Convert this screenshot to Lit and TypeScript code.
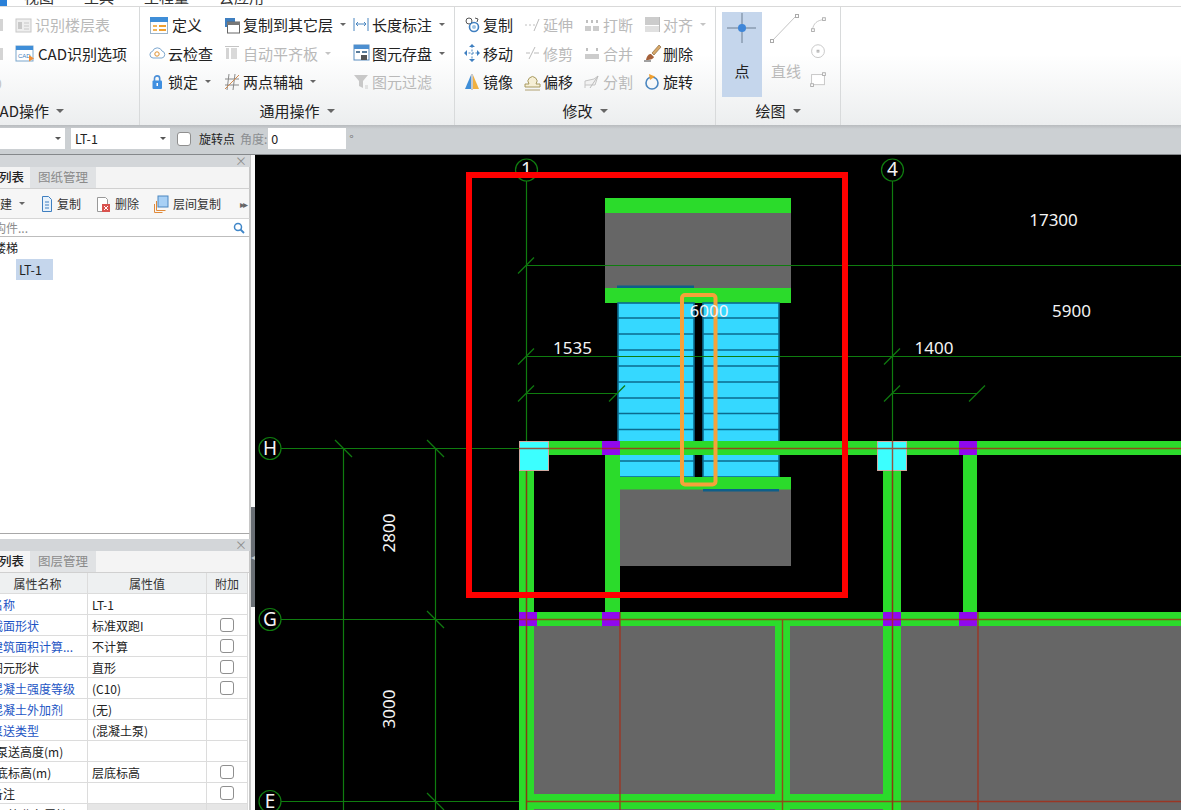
import { LitElement, html, css, svg, nothing } from 'lit';
import { customElement } from 'lit/decorators.js';

const ic = (w: number, body: unknown) =>
  html`<svg class="ic" width=${w} height="20" viewBox="0 0 ${w} 20">${body}</svg>`;

const ICONS: Record<string, unknown> = {
  define: ic(20, svg`<rect x="1.5" y="2.5" width="17" height="16" fill="#fff" stroke="#9db4c8"/><rect x="1" y="2" width="18" height="5" fill="#3f8ed8"/><rect x="4" y="10" width="4" height="2" fill="#f2b45a"/><rect x="4" y="14" width="4" height="2" fill="#f2b45a"/><rect x="10" y="10" width="7" height="2" fill="#f0a030"/><rect x="10" y="14" width="7" height="2" fill="#f0a030"/>`),
  copyLayer: ic(16, svg`<rect x="1" y="3" width="10" height="9" fill="#3f7fc0"/><rect x="3.5" y="7" width="12" height="11" fill="#fff" stroke="#666"/><rect x="3" y="7" width="13" height="3" fill="#777"/>`),
  dim: ic(16, svg`<path d="M1 3v13M15 3v13" stroke="#4a86c0" fill="none"/><path d="M3 9h10M5 7L3 9l2 2M11 7l2 2-2 2" stroke="#4a86c0" fill="none"/>`),
  cloud: ic(16, svg`<path d="M4 15a3.4 3.4 0 0 1-.4-6.7A5 5 0 0 1 13 8a3.6 3.6 0 0 1 0 7z" fill="#fff" stroke="#7da7cf"/><circle cx="8" cy="11" r="2.2" fill="none" stroke="#e0912f"/>`),
  level: ic(16, svg`<path d="M1 3.5h14" stroke="#c4c4c4"/><rect x="2" y="5" width="3" height="11" fill="#d4d4d4"/><rect x="7" y="5" width="6" height="11" fill="#d9d9d9"/>`),
  save: ic(16, svg`<rect x="1" y="2" width="15" height="15" fill="#fff" stroke="#5a8dbf"/><rect x="1" y="2" width="15" height="4" fill="#4d8fd0"/><rect x="3" y="8" width="4" height="2" fill="#5a7c9a"/><rect x="9" y="8" width="5" height="2" fill="#5a7c9a"/><rect x="8" y="12" width="6" height="5" fill="#555"/>`),
  lock: ic(16, svg`<path d="M5.5 9V6.5a2.6 2.6 0 0 1 5.2 0V9" fill="none" stroke="#4a8fd8" stroke-width="1.6"/><rect x="3.5" y="8.5" width="9.5" height="8.5" rx="1" fill="#3f8fe0"/><rect x="7.5" y="11" width="1.5" height="3" fill="#fff"/>`),
  axis: ic(16, svg`<path d="M5 2L3 18M11 2L9 18M1 7h14M1 13h14" stroke="#8a8a8a" fill="none"/><path d="M1 17L15 3" stroke="#d08a50"/>`),
  filter: ic(16, svg`<path d="M1 3h14L10 9v7L6 14V9z" fill="#c8c8c8"/><path d="M12 14h3M12 16h3" stroke="#ccc"/>`),
  cad: ic(20, svg`<rect x="1" y="3" width="17" height="15" fill="#fff" stroke="#7aa6cc"/><rect x="1" y="3" width="17" height="4" fill="#3f8ed8"/><text x="3" y="14.5" class="ict">CAD</text><path d="M14 12l5 3.5-5 3z" fill="#f0903a"/>`),
  floor: ic(17, svg`<rect x="1" y="4" width="15" height="13" fill="#eee" stroke="#c8c8c8"/><rect x="3" y="7" width="4" height="7" fill="#c8c8c8"/><path d="M9 8h5M9 11h5M9 14h5" stroke="#c8c8c8"/>`),
  copy: ic(16, svg`<circle cx="5" cy="6" r="3" fill="#fff" stroke="#555"/><circle cx="10" cy="12" r="4.5" fill="none" stroke="#3f7fc0" stroke-width="1.6"/><circle cx="10" cy="12" r="2" fill="#9cc3e6"/><path d="M11 3l3 1-1 3" fill="none" stroke="#555"/>`),
  move: ic(16, svg`<path d="M8 3v14M1 10h14" stroke="#4a86c0" stroke-dasharray="2 1.5"/><path d="M8 1l3 3H5zM8 19l3-3H5zM0 10l3-3v6zM16 10l-3-3v6z" fill="#3f7fc0"/>`),
  mirror: ic(16, svg`<path d="M7 3v14H1z" fill="#3f8ed8"/><path d="M9 3v14h6z" fill="#f0b040"/><path d="M8 2v16" stroke="#999"/>`),
  extend: ic(16, svg`<path d="M1 10h2M5 10h2M9 10h2" stroke="#c0c0c0"/><path d="M10 16L15 4" stroke="#bbb"/>`),
  trim: ic(16, svg`<path d="M2 10h4M10 10h5" stroke="#bbb"/><path d="M5 16L11 4" stroke="#bbb"/>`),
  offset: ic(16, svg`<path d="M1 15h15v-3h-4a4.500 4.500 0 1 0-7 0H1z" fill="#f6efd6" stroke="#a89a60"/><path d="M1 18h15" stroke="#b0a070"/>`),
  breakI: ic(16, svg`<rect x="1" y="11" width="6" height="5" fill="#ccc"/><rect x="9" y="11" width="6" height="5" fill="#ccc"/><path d="M3 5v3M8 5v3M13 5v3" stroke="#c0c0c0" stroke-width="2"/>`),
  merge: ic(16, svg`<rect x="1" y="11" width="14" height="5" fill="#ccc"/><path d="M3 5v3M13 5v3" stroke="#c0c0c0" stroke-width="2"/>`),
  split: ic(16, svg`<path d="M1 16V9l9-2 4-3-3 9H1" fill="#f2f2f2" stroke="#c4c4c4"/><path d="M6 16l8-12" stroke="#bbb"/>`),
  align: ic(16, svg`<rect x="1" y="2" width="14" height="8" fill="#ccc"/><rect x="1" y="11" width="14" height="6" fill="#e0e0e0"/><path d="M15.5 2v15" stroke="#bbb"/>`),
  del: ic(16, svg`<path d="M2 17c1-5 3-6 5-6l3 3c-1 2-3 3-8 3z" fill="#a5603a"/><path d="M8 10l7-8 2 2-7 8z" fill="#d8a868" stroke="#7a5a30" stroke-width=".6"/><path d="M0 18h7" stroke="#444"/>`),
  rotate: ic(16, svg`<circle cx="8" cy="11" r="6" fill="none" stroke="#4a86c0" stroke-width="1.6"/><path d="M5 2l6 2.5L6 8z" fill="#f0a030"/>`),
  copy2: ic(14, svg`<path d="M2.5 2.5h6l3 3v12h-9z" fill="#e8f2fb" stroke="#3f7fc0"/><path d="M5 8h4M5 11h4M5 14h4" stroke="#3f7fc0"/>`),
  del2: ic(14, svg`<path d="M1.5 3.5h8l2 2v12h-10z" fill="#fff" stroke="#999"/><rect x="6" y="10" width="8" height="8" fill="#d9534f"/><path d="M8 12l4 4M12 12l-4 4" stroke="#fff"/>`),
  layer: ic(14, svg`<rect x="4" y="2" width="10" height="11" fill="#a8d0f5" stroke="#4a86c0"/><path d="M2.500 7v9.500h9M.5 10v8.500h8" fill="none" stroke="#e08a3a"/>`),
};

interface Item { icon?: string; label: string; off?: boolean; caret?: boolean; }

const GROUP_1: Item[] = [
  { icon: 'floor', label: '识别楼层表', off: true },
  { icon: 'cad', label: 'CAD识别选项' },
];
const GROUP_2: Item[][] = [
  [{ icon: 'define', label: '定义' }, { icon: 'cloud', label: '云检查' }, { icon: 'lock', label: '锁定', caret: true }],
  [{ icon: 'copyLayer', label: '复制到其它层', caret: true }, { icon: 'level', label: '自动平齐板', off: true, caret: true }, { icon: 'axis', label: '两点辅轴', caret: true }],
  [{ icon: 'dim', label: '长度标注', caret: true }, { icon: 'save', label: '图元存盘', caret: true }, { icon: 'filter', label: '图元过滤', off: true }],
];
const GROUP_3: Item[][] = [
  [{ icon: 'copy', label: '复制' }, { icon: 'move', label: '移动' }, { icon: 'mirror', label: '镜像' }],
  [{ icon: 'extend', label: '延伸', off: true }, { icon: 'trim', label: '修剪', off: true }, { icon: 'offset', label: '偏移' }],
  [{ icon: 'breakI', label: '打断', off: true }, { icon: 'merge', label: '合并', off: true }, { icon: 'split', label: '分割', off: true }],
  [{ icon: 'align', label: '对齐', off: true, caret: true }, { icon: 'del', label: '删除' }, { icon: 'rotate', label: '旋转' }],
];

const PROPS = [
  { name: '名称', value: 'LT-1', link: true },
  { name: '截面形状', value: '标准双跑I', link: true, check: true },
  { name: '建筑面积计算...', value: '不计算', link: true, check: true },
  { name: '图元形状', value: '直形', check: true },
  { name: '混凝土强度等级', value: '(C10)', link: true, check: true },
  { name: '混凝土外加剂', value: '(无)', link: true },
  { name: '泵送类型', value: '(混凝土泵)', link: true },
  { name: '泵送高度(m)', value: '', tight: true },
  { name: '底标高(m)', value: '层底标高', check: true, tight: true },
  { name: '备注', value: '', check: true },
];

const FONT = css`
  :host {
    font-family: 'Noto Sans CJK SC', 'Noto Sans', sans-serif;
  }
`;

@customElement('cad-canvas')
export class CadCanvas extends LitElement {
  static styles = css`
    :host {
      display: block;
      flex: 1;
      min-width: 0;
      background: #000;
      overflow: hidden;
    }
    svg {
      display: block;
    }
    .grid {
      stroke: #0f7c0f;
      stroke-width: 1.2;
      fill: none;
    }
    .tick {
      stroke: #0f7a0f;
      stroke-width: 1.2;
    }
    .beam {
      fill: #2bdb2b;
    }
    .slab {
      fill: #666;
    }
    .col {
      fill: #9008ee;
    }
    .post {
      fill: #3cffff;
      stroke: #cfa9a0;
      stroke-width: 1;
    }
    .axisline {
      stroke: #a82a14;
      stroke-width: 1.4;
      stroke-opacity: 0.8;
      fill: none;
    }
    .flight {
      fill: #35d8ff;
      stroke: #0b6a8e;
      stroke-width: 1.6;
    }
    .tread {
      stroke: #0b6a8e;
      stroke-width: 1.6;
    }
    .edge {
      fill: #0d5f8a;
    }
    .orange {
      fill: none;
      stroke: #f6a23a;
      stroke-width: 4;
    }
    .red {
      fill: none;
      stroke: #ff0000;
      stroke-width: 6;
    }
    text {
      fill: #f4f4f4;
      font-family: 'Noto Sans', sans-serif;
      font-size: 17px;
      text-anchor: middle;
      dominant-baseline: central;
    }
    .mark {
      font-size: 19px;
    }
  `;

  render() {
    const slash = (x: number, y: number) => svg`<path class="tick" d="M${x - 8} ${y + 8}L${x + 8} ${y - 8}"/>`;
    const back = (x: number, y: number) => svg`<path class="tick" d="M${x - 8.500} ${y - 8.500}L${x + 8.500} ${y + 8.500}"/>`;
    const bubble = (x: number, y: number, t: string) => svg`<circle class="grid" cx=${x} cy=${y} r="11"/><text class="mark" x=${x} y=${y - 1}>${t}</text>`;
    const treads = [318, 334, 350, 366, 382, 398, 413.500, 429.500, 461];
    return html`
      <svg width="926" height="655" viewBox="255 155 926 655">
        <rect class="slab" x="534" y="626" width="241" height="184"/>
        <rect class="slab" x="790" y="626" width="93" height="184"/>
        <rect class="slab" x="901" y="626" width="280" height="184"/>

        <rect class="slab" x="605" y="198" width="186" height="105"/>
        <rect class="beam" x="605" y="198" width="186" height="15"/>
        <rect class="edge" x="617" y="285.500" width="77" height="3"/>
        <rect class="beam" x="605" y="288" width="186" height="15"/>

        <rect class="flight" x="618" y="303" width="76" height="174"/>
        <rect class="flight" x="703" y="303" width="76" height="174"/>
        ${treads.map((y) => svg`
          <path class="tread" d="M618 ${y}H694M703 ${y}H779"/>
        `)}

        <rect class="slab" x="620" y="489" width="171" height="77"/>
        <rect class="beam" x="620" y="477" width="171" height="12.500"/>
        <rect class="edge" x="703" y="489" width="76" height="2.500"/>

        <rect class="beam" x="549" y="441" width="632" height="14"/>
        <rect class="beam" x="519" y="612" width="662" height="14"/>
        <rect class="beam" x="519" y="794" width="382" height="15"/>
        <rect class="beam" x="519" y="471" width="15" height="339"/>
        <rect class="beam" x="605" y="455" width="15" height="157"/>
        <rect class="beam" x="775" y="626" width="15" height="184"/>
        <rect class="beam" x="883" y="471" width="18" height="339"/>
        <rect class="beam" x="963" y="455" width="14" height="157"/>

        <path class="grid" d="M526.500 181V810M892.500 181V810M526 265.500H1181M526 356.500H1181M526 393.500H617M892 393.500H977"/>
        <path class="grid" d="M281 448.500H519M281 619.500H519M281 801.500H519M343.500 448V810M435.500 448V810"/>
        ${[[526, 265.500], [526, 356.500], [526, 393.500], [617, 393.500], [892, 356.500], [892, 393.500], [977, 393.500]].map(([x, y]) => slash(x, y))}
        ${[[343.500, 448.500], [435.500, 448.500], [435.500, 619.500], [435.500, 801.500]].map(([x, y]) => back(x, y))}

        <rect class="post" x="519.500" y="441.500" width="29" height="29"/>
        <rect class="post" x="877.500" y="441.500" width="29" height="29"/>
        <rect class="col" x="602" y="441" width="18" height="14"/>
        <rect class="col" x="959" y="441" width="18" height="14"/>
        <rect class="col" x="519" y="612" width="18" height="14"/>
        <rect class="col" x="602" y="612" width="18" height="14"/>
        <rect class="col" x="883" y="612" width="18" height="14"/>
        <rect class="col" x="959" y="612" width="18" height="14"/>

        <path class="axisline" d="M519 448.500H1181M519 619.500H1181M526.500 471V810M620 612V810M782.500 619V810M892.500 441V810M978 612V810M526 801.500H1181"/>

        <rect class="orange" x="682" y="295" width="33.500" height="189.500" rx="3"/>

        <text x="1053.500" y="219">17300</text>
        <text x="1071.500" y="310">5900</text>
        <text x="572.500" y="347">1535</text>
        <text x="934" y="347">1400</text>
        <text x="709" y="310">6000</text>
        <text transform="translate(388.500 533) rotate(-90)">2800</text>
        <text transform="translate(388.500 709) rotate(-90)">3000</text>
        ${bubble(270, 448.500, 'H')}
        ${bubble(270, 619.500, 'G')}
        ${bubble(270, 801.500, 'E')}
        ${bubble(526.500, 170, '1')}
        ${bubble(892.500, 170, '4')}

        <rect class="red" x="469" y="175" width="376" height="420"/>
      </svg>
    `;
  }
}

@customElement('app-root')
export class AppRoot extends LitElement {
  static styles = [
    FONT,
    css`
      :host {
        display: flex;
        flex-direction: column;
        width: 1181px;
        height: 810px;
        overflow: hidden;
        background: #fff;
        color: #222;
        font-size: 12px;
      }

      .menu {
        display: flex;
        align-items: flex-end;
        gap: 30px;
        height: 6px;
        overflow: hidden;
        flex: none;
        font-size: 15px;
        line-height: 18px;
        color: #333;
        border-bottom: 1px solid #d9d9d9;
      }
      .menu-tab {
        width: 7px;
        height: 6px;
        margin-right: -13px;
        background: #2a80d8;
      }
      .menu span {
        flex: none;
      }

      .ribbon {
        display: flex;
        flex: none;
        height: 118px;
        background: linear-gradient(#fff 40%, #eceeef);
      }
      .group {
        display: flex;
        flex-direction: column;
        flex: none;
        overflow: hidden;
        border-right: 1px solid #d8dadb;
        box-sizing: border-box;
      }
      .g1 { width: 140px; }
      .g2 { width: 315px; }
      .g3 { width: 261px; }
      .g4 { width: 125px; }
      .group-body {
        display: flex;
        height: 90px;
        flex: none;
        box-sizing: border-box;
        padding-top: 3px;
      }
      .g2 .group-body { padding-left: 9px; }
      .g3 .group-body { padding-left: 9px; }
      .g4 .group-body { padding: 5px 0 0 6px; }
      .stack {
        display: flex;
        flex-direction: column;
        flex: none;
      }
      .g2 .stack:nth-child(1) { width: 75px; }
      .g2 .stack:nth-child(2) { width: 129px; }
      .g3 .stack { width: 60px; }
      .g1 .stub {
        width: 15px;
        overflow: hidden;
      }
      .stub div {
        display: flex;
        align-items: center;
        height: 29px;
        color: #c4c4c4;
        font-size: 14px;
        margin-left: -6px;
      }
      .stub i {
        display: block;
        width: 9px;
        height: 12px;
        background: #d4d4d4;
      }
      .item {
        display: flex;
        align-items: center;
        gap: 3px;
        height: 29px;
        margin-bottom: -0.34px;
        font-size: 15px;
        white-space: nowrap;
      }
      .item.off {
        color: #b9b9b9;
      }
      .ic {
        display: block;
        flex: none;
        overflow: visible;
      }
      .ict {
        font-size: 6px;
        fill: #3f7fc0;
        font-family: 'Liberation Sans', sans-serif;
      }
      .caret {
        width: 0;
        height: 0;
        margin-left: 4px;
        border: 3px solid transparent;
        border-top: 3.500px solid #666;
        border-bottom: 0;
        flex: none;
      }
      .item.off .caret {
        border-top-color: #c4c4c4;
      }
      .group-label {
        display: flex;
        align-items: center;
        justify-content: center;
        gap: 7px;
        flex: 1;
        font-size: 15px;
        padding-bottom: 1px;
      }
      .g1 .group-label {
        justify-content: flex-start;
        margin-left: -10px;
      }
      .group-label .caret {
        margin-left: 0;
        border-width: 4px;
        border-bottom: 0;
      }
      .draw {
        display: flex;
        flex-direction: column;
        align-items: center;
        width: 40px;
        height: 85px;
        font-size: 15px;
        flex: none;
      }
      .draw.active {
        background: #c5d6ec;
      }
      .draw.line {
        width: 44px;
        margin-left: 2px;
        color: #b9b9b9;
      }
      .draw svg {
        display: block;
        margin-bottom: 2px;
      }
      .mini {
        display: flex;
        flex-direction: column;
        padding-top: 3px;
      }
      .mini svg {
        display: block;
        margin-bottom: 9px;
      }

      .tools {
        display: flex;
        align-items: center;
        flex: none;
        height: 30px;
        box-sizing: border-box;
        padding-bottom: 2px;
        background: linear-gradient(#b8bbbe, #ccd0d3 4px);
        border-bottom: 1px solid #85888b;
      }
      .select {
        display: flex;
        align-items: center;
        justify-content: space-between;
        box-sizing: border-box;
        height: 21px;
        padding: 0 4px;
        background: #fff;
        font-size: 12.500px;
      }
      .select .caret {
        border-top-color: #555;
      }
      .s1 { width: 65px; margin-right: 6px; }
      .s2 { width: 99px; margin-right: 7px; }
      .box {
        display: block;
        width: 14px;
        height: 14px;
        box-sizing: border-box;
        border: 1px solid #8f8f8f;
        border-radius: 3px;
        background: #fff;
      }
      .tools .box {
        margin-right: 8px;
      }
      .tools .dim {
        margin-left: 5px;
        color: #8b8e91;
      }
      .tools .input {
        width: 78px;
        height: 21px;
        line-height: 21px;
        padding-left: 3px;
        box-sizing: border-box;
        background: #fff;
        font-size: 12.500px;
        margin-left: 1px;
      }
      .tools .deg {
        margin-left: 3px;
        color: #777;
      }

      .work {
        display: flex;
        flex: 1;
        min-height: 0;
      }
      .side {
        display: flex;
        flex-direction: column;
        width: 250px;
        flex: none;
        overflow: hidden;
      }
      .split {
        display: flex;
        flex-direction: column;
        width: 5px;
        box-sizing: border-box;
        border-left: 1px solid #c8c8c8;
        background: #fafafa;
        flex: none;
      }
      .split div {
        display: flex;
        align-items: center;
        height: 100px;
        margin-top: 352px;
        background: #6a6f75;
        color: #c4c8cc;
        font-size: 8px;
        line-height: 1;
        overflow: hidden;
      }
      .title {
        display: flex;
        justify-content: flex-end;
        align-items: center;
        flex: none;
        height: 12px;
        padding-right: 3px;
        background: #d3d6d9;
        color: #8d8d8d;
        font-size: 12px;
        line-height: 1;
      }
      .tabs {
        display: flex;
        flex: none;
        height: 22px;
        box-sizing: border-box;
        background: #f4f4f4;
        border-bottom: 1px solid #d0d0d0;
        border-right: 1px solid #c6c6c6;
        font-size: 12.500px;
        line-height: 19px;
      }
      .tab-on {
        width: 30px;
        flex: none;
        font-weight: 500;
        color: #222;
        overflow: hidden;
        text-indent: -1px;
      }
      .tab-off {
        width: 66px;
        flex: none;
        text-align: center;
        background: #e0e2e4;
        color: #8a8a8a;
      }
      .bar {
        display: flex;
        align-items: center;
        flex: none;
        height: 29px;
        background: #f6f6f6;
        border-right: 1px solid #c6c6c6;
        color: #333;
        white-space: nowrap;
      }
      .bar .cut {
        margin-left: -12px;
        width: 28px;
        display: flex;
        align-items: center;
        flex: none;
      }
      .bar .cut .caret {
        margin-left: 7px;
      }
      .bar .act {
        display: flex;
        align-items: center;
        gap: 5px;
        flex: none;
      }
      .bar .a1 { margin-left: 24px; width: 56px; gap: 3px; }
      .bar .a2 { width: 58px; }
      .bar .a3 { width: 86px; }
      .bar .more {
        color: #666;
        font-size: 10px;
        letter-spacing: -2px;
      }
      .search {
        display: flex;
        align-items: center;
        justify-content: space-between;
        flex: none;
        height: 19px;
        box-sizing: border-box;
        padding-right: 4px;
        border-top: 1px solid #d6d6d6;
        border-bottom: 1px solid #bdbdbd;
        border-right: 1px solid #c6c6c6;
        color: #8d8d8d;
        overflow: hidden;
      }
      .search span {
        margin-left: -6px;
      }
      .tree {
        height: 297px;
        flex: none;
        box-sizing: border-box;
        border-right: 1px solid #c6c6c6;
        border-bottom: 1px solid #a8a8a8;
        padding-top: 2px;
      }
      .tree-head {
        height: 20px;
        line-height: 18px;
        margin-left: -6px;
      }
      .tree-leaf {
        width: 37px;
        height: 21px;
        line-height: 21px;
        margin-left: 16px;
        padding-left: 3px;
        box-sizing: border-box;
        background: #c5d6ec;
        font-size: 12.500px;
      }
      .gap {
        height: 5px;
        flex: none;
        border-right: 1px solid #c6c6c6;
      }
      .table {
        display: grid;
        grid-template-columns: 88px 119px 41px;
        grid-auto-rows: 21px;
        width: 249px;
        flex: none;
        border-right: 1px solid #c6c6c6;
        box-sizing: content-box;
      }
      .cell {
        display: flex;
        align-items: center;
        box-sizing: border-box;
        overflow: hidden;
        white-space: nowrap;
        border-right: 1px solid #dcdcdc;
        border-bottom: 1px solid #dcdcdc;
        background: #fff;
      }
      .head {
        justify-content: center;
        background: #eef0f1;
        color: #333;
      }
      .head.first {
        padding-right: 12px;
      }
      .name span {
        margin-left: -9px;
        flex: none;
      }
      .name.tight span {
        margin-left: -4px;
      }
      .name.link {
        color: #1d55c4;
      }
      .val {
        padding-left: 4px;
      }
      .chk {
        justify-content: center;
      }
      .grey {
        background: #e6e6e6;
      }
      .canvas-wrap {
        display: flex;
        flex: 1;
        min-width: 0;
      }
    `,
  ];

  private _item(it: Item) {
    return html`
      <div class="item ${it.off ? 'off' : ''}">
        ${it.icon ? ICONS[it.icon] : nothing}
        <span>${it.label}</span>
        ${it.caret ? html`<span class="caret"></span>` : nothing}
      </div>
    `;
  }

  private _label(text: string) {
    return html`<div class="group-label"><span>${text}</span><span class="caret"></span></div>`;
  }

  private _ribbon() {
    return html`
      <div class="ribbon">
        <div class="group g1">
          <div class="group-body">
            <div class="stack stub">
              <div><i></i></div>
              <div><i></i></div>
              <div>0</div>
            </div>
            <div class="stack">
              ${GROUP_1.map((it) => this._item(it))}
            </div>
          </div>
          ${this._label('CAD操作')}
        </div>
        <div class="group g2">
          <div class="group-body">
            ${GROUP_2.map((col) => html`<div class="stack">${col.map((it) => this._item(it))}</div>`)}
          </div>
          ${this._label('通用操作')}
        </div>
        <div class="group g3">
          <div class="group-body">
            ${GROUP_3.map((col) => html`<div class="stack">${col.map((it) => this._item(it))}</div>`)}
          </div>
          ${this._label('修改')}
        </div>
        <div class="group g4">
          <div class="group-body">
            <div class="draw active">
              <svg width="40" height="46" viewBox="0 0 40 46">
                <path d="M20 1v30M5 16h29" stroke="#6d7f92" fill="none"/>
                <circle cx="20" cy="16" r="4" fill="#3f86d8"/>
              </svg>
              <span>点</span>
            </div>
            <div class="draw line">
              <svg width="44" height="46" viewBox="0 0 44 46">
                <path d="M8 29L32 4" stroke="#c4c4c4" fill="none"/>
                <rect x="6.500" y="27.500" width="3" height="3" fill="#fff" stroke="#aaa"/>
                <rect x="31.500" y="2.500" width="3" height="3" fill="#fff" stroke="#aaa"/>
              </svg>
              <span>直线</span>
            </div>
            <div class="mini">
              <svg width="20" height="20" viewBox="0 0 20 20">
                <path d="M4 16C5 9 9 6 16 5" stroke="#c4c4c4" fill="none"/>
                <rect x="3" y="15" width="3" height="3" fill="#fff" stroke="#aaa"/>
                <rect x="15" y="3" width="3" height="3" fill="#fff" stroke="#aaa"/>
              </svg>
              <svg width="20" height="20" viewBox="0 0 20 20">
                <circle cx="10" cy="10" r="7" fill="#fff" stroke="#c4c4c4"/>
                <rect x="9" y="9" width="2" height="2" fill="none" stroke="#aaa"/>
              </svg>
              <svg width="20" height="20" viewBox="0 0 20 20">
                <rect x="3" y="5" width="14" height="11" fill="#fff" stroke="#c4c4c4"/>
                <rect x="2" y="15" width="3" height="3" fill="#fff" stroke="#aaa"/>
                <rect x="15" y="3" width="3" height="3" fill="#fff" stroke="#aaa"/>
              </svg>
            </div>
          </div>
          ${this._label('绘图')}
        </div>
      </div>
    `;
  }

  private _tools() {
    return html`
      <div class="tools">
        <div class="select s1"><span></span><span class="caret"></span></div>
        <div class="select s2"><span>LT-1</span><span class="caret"></span></div>
        <span class="box"></span>
        <span>旋转点</span>
        <span class="dim">角度:</span>
        <div class="input">0</div>
        <span class="deg">°</span>
      </div>
    `;
  }

  private _side() {
    return html`
      <div class="side">
        <div class="title">×</div>
        <div class="tabs">
          <div class="tab-on">列表</div>
          <div class="tab-off">图纸管理</div>
        </div>
        <div class="bar">
          <div class="cut"><span>新建</span><span class="caret"></span></div>
          <div class="act a1">${ICONS.copy2}<span>复制</span></div>
          <div class="act a2">${ICONS.del2}<span>删除</span></div>
          <div class="act a3">${ICONS.layer}<span>层间复制</span></div>
          <span class="more">▸▸</span>
        </div>
        <div class="search">
          <span>构件...</span>
          <svg width="12" height="12" viewBox="0 0 12 12">
            <circle cx="5" cy="5" r="3.500" fill="none" stroke="#3f86c8" stroke-width="1.500"/>
            <path d="M7.500 7.500L11 11" stroke="#3f86c8" stroke-width="1.800"/>
          </svg>
        </div>
        <div class="tree">
          <div class="tree-head">楼梯</div>
          <div class="tree-leaf">LT-1</div>
        </div>
        <div class="gap"></div>
        <div class="title">×</div>
        <div class="tabs">
          <div class="tab-on">列表</div>
          <div class="tab-off">图层管理</div>
        </div>
        <div class="table">
          <div class="cell head first">属性名称</div>
          <div class="cell head">属性值</div>
          <div class="cell head">附加</div>
          ${PROPS.map((p) => html`
            <div class="cell name ${p.link ? 'link' : ''} ${p.tight ? 'tight' : ''}"><span>${p.name}</span></div>
            <div class="cell val">${p.value}</div>
            <div class="cell chk">${p.check ? html`<span class="box"></span>` : nothing}</div>
          `)}
          <div class="cell name tight"><span>钢筋业务属性</span></div>
          <div class="cell grey"></div>
          <div class="cell grey"></div>
        </div>
      </div>
      <div class="split"><div>◂</div></div>
    `;
  }

  render() {
    return html`
      <div class="menu">
        <div class="menu-tab"></div>
        <span>视图</span>
        <span>工具</span>
        <span>工程量</span>
        <span>云应用</span>
      </div>
      ${this._ribbon()}
      ${this._tools()}
      <div class="work">
        ${this._side()}
        <div class="canvas-wrap"><cad-canvas></cad-canvas></div>
      </div>
    `;
  }
}
